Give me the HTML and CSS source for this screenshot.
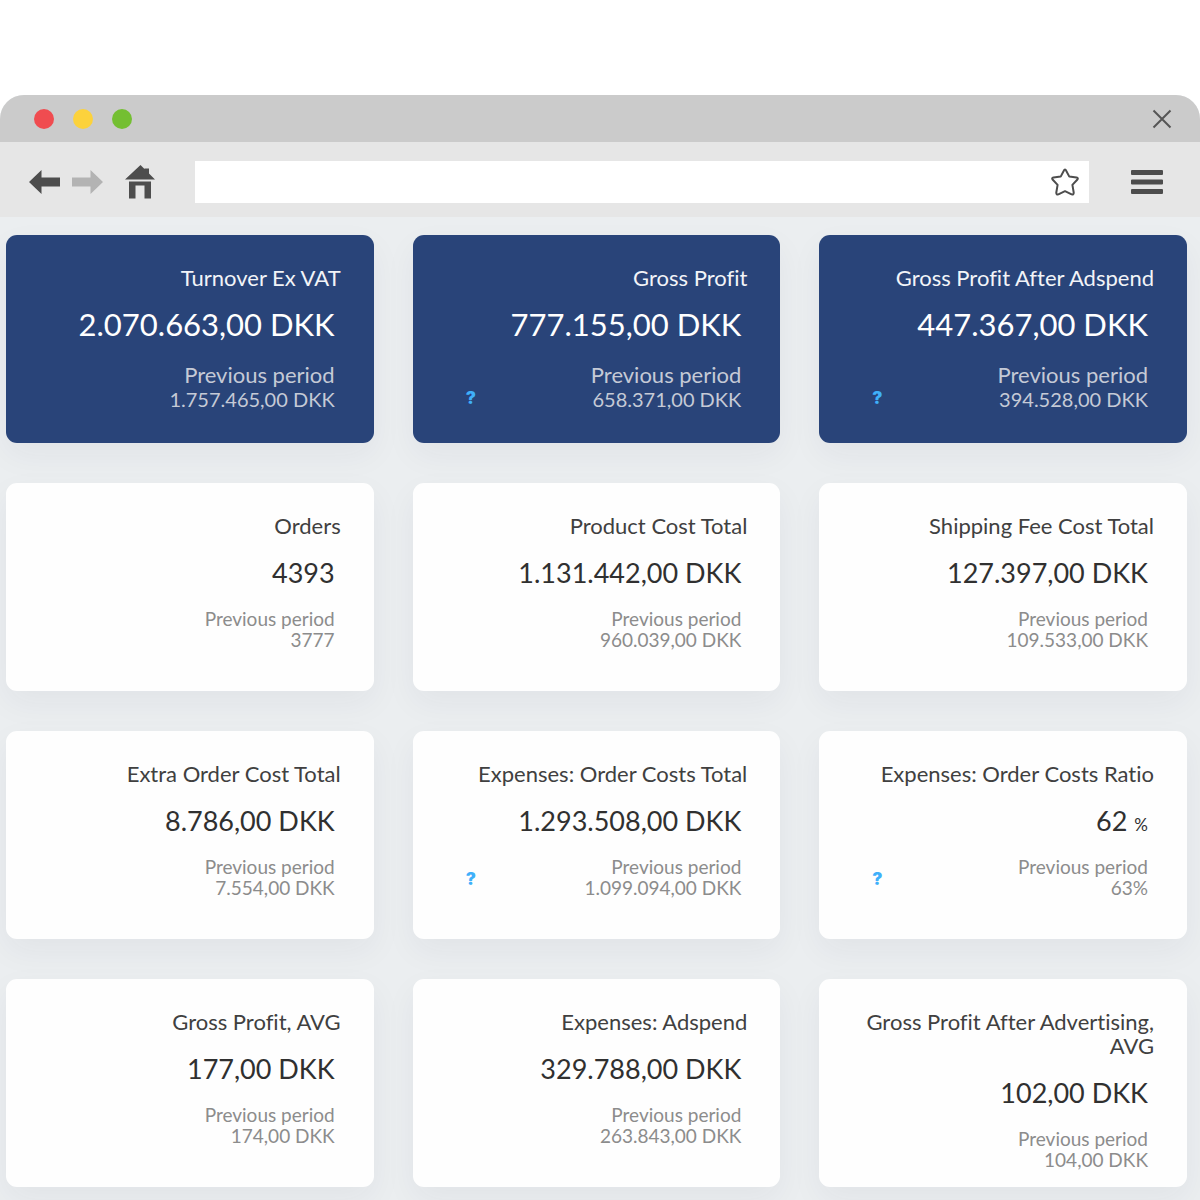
FILE: index.html
```html
<!DOCTYPE html>
<html lang="en">
<head>
<meta charset="utf-8">
<meta name="viewport" content="width=device-width, initial-scale=1">
<title>Profit overview</title>
<link rel="stylesheet" href="styles.css">
</head>
<body>
<div class="window">
  <header>
    <div class="titlebar">
      <span class="dot dot-red"></span>
      <span class="dot dot-yellow"></span>
      <span class="dot dot-green"></span>
      <button class="icon-button close" type="button" aria-label="Close"><svg width="20" height="20" viewBox="0 0 20 20"><path d="M1.500 1.500 18.500 18.500M18.500 1.500 1.500 18.500" fill="none" stroke="#555" stroke-width="2"/></svg></button>
    </div>
    <div class="toolbar">
      <button class="icon-button" type="button" aria-label="Back"><svg width="31" height="24" viewBox="0 0 31 24"><path d="M0 12 12.500 0V7.500H31V16.500H12.500V24Z" fill="#4d4d4d"/></svg></button>
      <button class="icon-button forward" type="button" aria-label="Forward"><svg width="31" height="24" viewBox="0 0 31 24"><path d="M31 12 18.500 0V7.500H0V16.500H18.500V24Z" fill="#b3b3b3"/></svg></button>
      <button class="icon-button home" type="button" aria-label="Home"><svg width="30" height="34" viewBox="0 0 30 34"><path d="M0 14.500 15.500 0 19.500 4V3.500H24V8.500L30 14.500ZM4 16.500H26V33.500H19.500V20.500H10.500V33.500H4Z" fill="#4d4d4d"/></svg></button>
      <div class="address">
        <input class="address-input" type="text" aria-label="Address">
        <button class="icon-button" type="button" aria-label="Bookmark"><svg width="28" height="28" viewBox="0 0 28 28"><path d="M14 1.500Q14.700 1.500 15.200 2.700L18.300 8.600 25.500 9.500Q27.700 10 26.200 11.800L21.400 16.900 22.700 24.500Q22.800 27 20.600 26.400L14 23.200 7.400 26.400Q5.200 27 5.300 24.500L6.600 16.900 1.800 11.800Q.3 10 2.500 9.500L9.700 8.600 12.800 2.700Q13.300 1.500 14 1.500Z" fill="none" stroke="#4d4d4d" stroke-width="2" stroke-linejoin="round"/></svg></button>
      </div>
      <button class="icon-button" type="button" aria-label="Menu"><svg width="32" height="24" viewBox="0 0 32 24"><path d="M1 0H31Q32 0 32 1V4Q32 5 31 5H1Q0 5 0 4V1Q0 0 1 0ZM1 9.500H31Q32 9.500 32 10.500V13.500Q32 14.500 31 14.500H1Q0 14.500 0 13.500V10.500Q0 9.500 1 9.500ZM1 19H31Q32 19 32 20V23Q32 24 31 24H1Q0 24 0 23V20Q0 19 1 19Z" fill="#4d4d4d"/></svg></button>
    </div>
  </header>
  <main class="cards">
    <section class="card card-primary">
      <h2 class="title">Turnover Ex VAT</h2>
      <p class="value">2.070.663,00 DKK</p>
      <div class="foot"><p class="previous">Previous period <span class="amount">1.757.465,00 DKK</span></p></div>
    </section>
    <section class="card card-primary">
      <h2 class="title">Gross Profit</h2>
      <p class="value">777.155,00 DKK</p>
      <div class="foot"><button class="help" type="button">?</button><p class="previous">Previous period <span class="amount">658.371,00 DKK</span></p></div>
    </section>
    <section class="card card-primary">
      <h2 class="title">Gross Profit After Adspend</h2>
      <p class="value">447.367,00 DKK</p>
      <div class="foot"><button class="help" type="button">?</button><p class="previous">Previous period <span class="amount">394.528,00 DKK</span></p></div>
    </section>
    <section class="card">
      <h2 class="title">Orders</h2>
      <p class="value">4393</p>
      <div class="foot"><p class="previous">Previous period <span class="amount">3777</span></p></div>
    </section>
    <section class="card">
      <h2 class="title">Product Cost Total</h2>
      <p class="value">1.131.442,00 DKK</p>
      <div class="foot"><p class="previous">Previous period <span class="amount">960.039,00 DKK</span></p></div>
    </section>
    <section class="card">
      <h2 class="title">Shipping Fee Cost Total</h2>
      <p class="value">127.397,00 DKK</p>
      <div class="foot"><p class="previous">Previous period <span class="amount">109.533,00 DKK</span></p></div>
    </section>
    <section class="card">
      <h2 class="title">Extra Order Cost Total</h2>
      <p class="value">8.786,00 DKK</p>
      <div class="foot"><p class="previous">Previous period <span class="amount">7.554,00 DKK</span></p></div>
    </section>
    <section class="card">
      <h2 class="title">Expenses: Order Costs Total</h2>
      <p class="value">1.293.508,00 DKK</p>
      <div class="foot"><button class="help" type="button">?</button><p class="previous">Previous period <span class="amount">1.099.094,00 DKK</span></p></div>
    </section>
    <section class="card">
      <h2 class="title">Expenses: Order Costs Ratio</h2>
      <p class="value">62 <span class="unit">%</span></p>
      <div class="foot"><button class="help" type="button">?</button><p class="previous">Previous period <span class="amount">63%</span></p></div>
    </section>
    <section class="card">
      <h2 class="title">Gross Profit, AVG</h2>
      <p class="value">177,00 DKK</p>
      <div class="foot"><p class="previous">Previous period <span class="amount">174,00 DKK</span></p></div>
    </section>
    <section class="card">
      <h2 class="title">Expenses: Adspend</h2>
      <p class="value">329.788,00 DKK</p>
      <div class="foot"><p class="previous">Previous period <span class="amount">263.843,00 DKK</span></p></div>
    </section>
    <section class="card">
      <h2 class="title">Gross Profit After Advertising, AVG</h2>
      <p class="value">102,00 DKK</p>
      <div class="foot"><p class="previous">Previous period <span class="amount">104,00 DKK</span></p></div>
    </section>
  </main>
</div>
</body>
</html>
```
FILE: styles.css
```css
* {
  box-sizing: border-box;
}

body {
  margin: 0;
  padding-top: 95px;
  background: #fff;
  color: #404040;
  font-family: Lato, "Liberation Sans", sans-serif;
  font-variant-ligatures: none;
}

.window {
  overflow: hidden;
  border-radius: 24px 24px 0 0;
  background: #ebeef0;
}

.titlebar {
  display: flex;
  align-items: center;
  gap: 19px;
  height: 47px;
  padding: 0 28px 0 34px;
  background: #cbcbcb;
}

.dot {
  width: 20px;
  height: 20px;
  border-radius: 50%;
}

.dot-red {
  background: #f04c50;
}

.dot-yellow {
  background: #fcd23c;
}

.dot-green {
  background: #74bf32;
}

.icon-button {
  display: flex;
  padding: 0;
  border: 0;
  background: none;
}

.close {
  margin-left: auto;
}

.toolbar {
  display: flex;
  align-items: center;
  height: 75px;
  padding: 4px 37px 0 29px;
  background: #e6e6e6;
}

.forward {
  margin-left: 12px;
}

.home {
  margin-left: 22px;
}

.address {
  display: flex;
  flex: 1;
  align-items: center;
  height: 42px;
  margin: 0 42px 0 40px;
  padding-right: 10px;
  background: #fff;
}

.address-input {
  flex: 1;
  height: 42px;
  padding: 0 12px;
  border: 0;
  background: none;
  font: inherit;
}

.cards {
  display: grid;
  grid-template-columns: repeat(3, 1fr);
  gap: 40px 39px;
  padding: 18px 13px 13px 6px;
}

.card {
  min-height: 208px;
  padding: 31px 33px 12px 36px;
  border-radius: 11px;
  background: #fefefe;
  box-shadow: 0 12px 32px rgba(40, 30, 80, 0.05);
  text-align: right;
}

.title,
.value,
.previous {
  margin: 0;
  font-weight: 400;
}

.title {
  font-size: 22px;
  line-height: 24px;
}

.value {
  margin-top: 17px;
  padding-right: 6px;
  font-size: 27px;
  line-height: 36px;
  color: #303030;
}

.unit {
  font-size: 17px;
  line-height: 20px;
}

.foot {
  display: flex;
  align-items: center;
  margin-top: 17px;
  padding: 0 6px 0 17px;
}

.previous {
  margin-left: auto;
  color: #8c8c8c;
  font-size: 19px;
  line-height: 21px;
}

.amount {
  display: block;
}

.help {
  padding: 4px 0 0;
  border: 0;
  background: none;
  color: #3fb0fa;
  font: 900 17px/24px Inter, "Liberation Sans", sans-serif;
}

.card-primary {
  background: #294479;
  color: #f2f4f8;
}

.card-primary .value {
  margin-top: 14px;
  color: #fff;
  font-size: 31px;
  line-height: 40px;
}

.card-primary .foot {
  align-items: flex-end;
  margin-top: 19px;
}

.card-primary .help {
  line-height: 26px;
}

.card-primary .previous {
  color: #c5cad6;
  font-size: 22px;
  line-height: 24px;
}

.card-primary .amount {
  font-size: 20px;
}
```
